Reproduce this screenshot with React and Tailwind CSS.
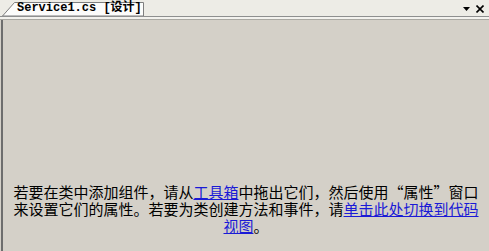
export default function App() {
  return (
    <div className="w-[489px] h-[251px] flex flex-col bg-[#d4d0c8] overflow-hidden">
      {/* tab strip */}
      <div className="h-[17px] flex items-end bg-[#edece6] border-b border-[#8e8f8f] relative">
        <div className="relative ml-[2px] h-[15px] w-[142px] flex items-center">
          <svg className="absolute inset-0" width="142" height="15" viewBox="0 0 142 15">
            <polygon points="0.5,15 12.5,1.5 141.5,1.5 141.5,15" fill="#fcfcfb" stroke="#7f7f7f" strokeWidth="1" />
          </svg>
          <span className="relative pl-[15px] text-[12px] leading-[13px] font-bold text-black whitespace-nowrap" style={{ fontFamily: '"Liberation Mono", "Noto Sans CJK SC", monospace' }}>
            Service1.cs [设计]
          </span>
        </div>
        <div className="ml-auto mr-[5px] mb-[3px] flex items-center gap-[6px]">
          <svg width="7" height="4" viewBox="0 0 7 4">
            <polygon points="0,0 7,0 3.5,4" fill="#000" />
          </svg>
          <svg width="8" height="8" viewBox="0 0 8 8">
            <path d="M0.5 0.5 L7.5 7.5 M7.5 0.5 L0.5 7.5" stroke="#000" strokeWidth="1.6" />
          </svg>
        </div>
      </div>
      <div className="h-[3px] bg-[#f3f2ee] border-b border-[#a9a8a2]" />
      {/* design surface */}
      <div className="flex-1 flex flex-col border-l-2 border-[#6d6d6d] ml-[1px]">
        <div className="flex-1" />
        <p
          className="w-[470px] mx-auto mb-[17px] text-center text-[15px] leading-[17px] text-black"
          style={{ fontFamily: '"Noto Sans CJK SC", sans-serif' }}
          lang="zh-CN"
        >
          若要在类中添加组件，请从<span className="text-[#1a1ad6] underline">工具箱</span>中拖出它们，然后使用“属性”窗口来设置它们的属性。若要为类创建方法和事件，请<span className="text-[#1a1ad6] underline">单击此处切换到代码视图</span>。
        </p>
      </div>
    </div>
  );
}
